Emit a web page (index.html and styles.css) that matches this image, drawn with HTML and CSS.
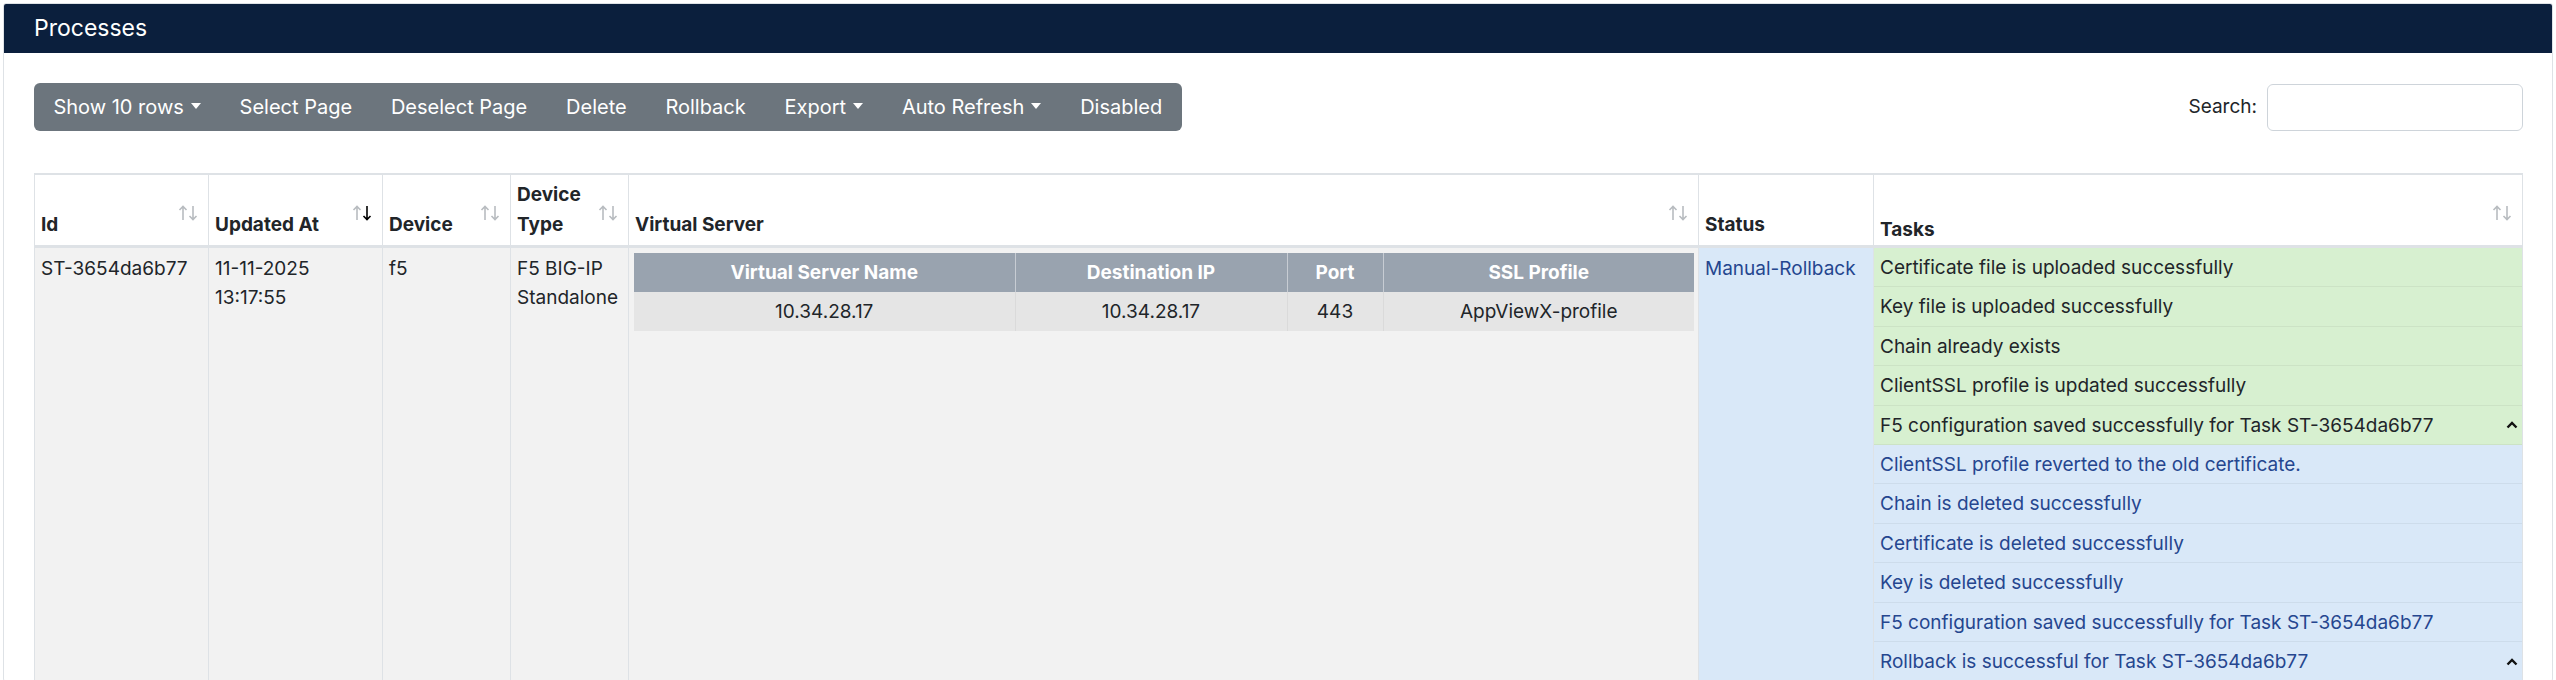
FILE: index.html
```html
<!DOCTYPE html>
<html lang="en">
<head>
    <meta charset="UTF-8">
    <meta name="viewport" content="width=device-width, initial-scale=1.0">
    <title>Processes</title>
    <link rel="stylesheet" href="styles.css">
</head>
<body>
    <div class="card">
        <div class="card-header">Processes</div>
        <div class="card-body">
            <div class="table-top">
                <div class="btn-group">
                    <button type="button" class="btn">Show 10 rows<span class="caret"></span></button>
                    <button type="button" class="btn">Select Page</button>
                    <button type="button" class="btn">Deselect Page</button>
                    <button type="button" class="btn">Delete</button>
                    <button type="button" class="btn">Rollback</button>
                    <button type="button" class="btn">Export<span class="caret"></span></button>
                    <button type="button" class="btn">Auto Refresh<span class="caret"></span></button>
                    <button type="button" class="btn">Disabled</button>
                </div>
                <label class="search">Search: <input type="search"></label>
            </div>

            <table class="processes">
                <thead>
                    <tr>
                        <th class="col-id sortable">Id
                            <svg class="sort" viewBox="0 0 20 16"><path class="up" d="M5 15V1.5M1.5 5L5 1.5L8.5 5"/><path class="down" d="M15 1V14.5M11.5 11L15 14.5L18.5 11"/></svg>
                        </th>
                        <th class="col-date sortable">Updated At
                            <svg class="sort desc" viewBox="0 0 20 16"><path class="up" d="M5 15V1.5M1.5 5L5 1.5L8.5 5"/><path class="down" d="M15 1V14.5M11.5 11L15 14.5L18.5 11"/></svg>
                        </th>
                        <th class="col-device sortable">Device
                            <svg class="sort" viewBox="0 0 20 16"><path class="up" d="M5 15V1.5M1.5 5L5 1.5L8.5 5"/><path class="down" d="M15 1V14.5M11.5 11L15 14.5L18.5 11"/></svg>
                        </th>
                        <th class="col-type sortable">Device Type
                            <svg class="sort" viewBox="0 0 20 16"><path class="up" d="M5 15V1.5M1.5 5L5 1.5L8.5 5"/><path class="down" d="M15 1V14.5M11.5 11L15 14.5L18.5 11"/></svg>
                        </th>
                        <th class="col-vs sortable">Virtual Server
                            <svg class="sort" viewBox="0 0 20 16"><path class="up" d="M5 15V1.5M1.5 5L5 1.5L8.5 5"/><path class="down" d="M15 1V14.5M11.5 11L15 14.5L18.5 11"/></svg>
                        </th>
                        <th class="col-status">Status</th>
                        <th class="col-tasks sortable">Tasks
                            <svg class="sort" viewBox="0 0 20 16"><path class="up" d="M5 15V1.5M1.5 5L5 1.5L8.5 5"/><path class="down" d="M15 1V14.5M11.5 11L15 14.5L18.5 11"/></svg>
                        </th>
                    </tr>
                </thead>
                <tbody>
                    <tr>
                        <td>ST-3654da6b77</td>
                        <td>11-11-2025<br>13:17:55</td>
                        <td>f5</td>
                        <td>F5 BIG-IP Standalone</td>
                        <td class="vs-cell">
                            <table class="vs-table">
                                <thead>
                                    <tr>
                                        <th class="vs-name">Virtual Server Name</th>
                                        <th class="vs-ip">Destination IP</th>
                                        <th class="vs-port">Port</th>
                                        <th>SSL Profile</th>
                                    </tr>
                                </thead>
                                <tbody>
                                    <tr>
                                        <td>10.34.28.17</td>
                                        <td>10.34.28.17</td>
                                        <td>443</td>
                                        <td>AppViewX-profile</td>
                                    </tr>
                                </tbody>
                            </table>
                        </td>
                        <td class="status">Manual-Rollback</td>
                        <td class="tasks">
                            <div class="task ok">Certificate file is uploaded successfully</div>
                            <div class="task ok">Key file is uploaded successfully</div>
                            <div class="task ok">Chain already exists</div>
                            <div class="task ok">ClientSSL profile is updated successfully</div>
                            <div class="task ok">F5 configuration saved successfully for Task ST-3654da6b77
                                <svg class="chevron" viewBox="0 0 12 8"><path d="M1.5 6.5L6 2L10.5 6.5"/></svg>
                            </div>
                            <div class="task info">ClientSSL profile reverted to the old certificate.</div>
                            <div class="task info">Chain is deleted successfully</div>
                            <div class="task info">Certificate is deleted successfully</div>
                            <div class="task info">Key is deleted successfully</div>
                            <div class="task info">F5 configuration saved successfully for Task ST-3654da6b77</div>
                            <div class="task info">Rollback is successful for Task ST-3654da6b77
                                <svg class="chevron" viewBox="0 0 12 8"><path d="M1.5 6.5L6 2L10.5 6.5"/></svg>
                            </div>
                        </td>
                    </tr>
                </tbody>
            </table>
        </div>
    </div>
</body>
</html>
```

FILE: styles.css
```css
body {
    margin: 3px;
    font-family: Inter, 'Liberation Sans', Arial, sans-serif;
    font-size: 19px;
    line-height: 1.5;
    color: #212529;
    background-color: #fff;
}
.card {
    border: 1px solid #dee2e6;
    border-radius: 3px;
    overflow: hidden;
}
.card-header {
    background-color: #0b1f3d;
    color: #fff;
    font-size: 23px;
    height: 49px;
    line-height: 49px;
    padding: 0 30px;
}
.card-body {
    padding: 30px 29px 0 30px;
}
.table-top {
    display: flex;
    justify-content: space-between;
    align-items: center;
    margin-bottom: 42px;
}
.btn-group {
    display: flex;
    background-color: #6c757d;
    border-radius: 6px;
    height: 48px;
}
.btn {
    background: none;
    border: none;
    color: #fff;
    font-family: inherit;
    font-size: 20px;
    padding: 0 19.4px;
    display: flex;
    align-items: center;
    cursor: pointer;
}
.caret {
    display: inline-block;
    margin-left: 7px;
    border-top: 6px solid #fff;
    border-left: 5px solid transparent;
    border-right: 5px solid transparent;
    margin-top: -2px;
}
.search {
    display: flex;
    align-items: center;
    gap: 10px;
    font-size: 19px;
}
.search input {
    width: 256px;
    height: 47px;
    box-sizing: border-box;
    border: 1px solid #ced4da;
    border-radius: 6px;
    font-family: inherit;
    font-size: 19px;
    padding: 0 10px;
}
.processes {
    width: 100%;
    table-layout: fixed;
    border-collapse: collapse;
    border-top: 2px solid #dee2e6;
    border-right: 1px solid #dee2e6;
}
.processes th,
.processes td {
    box-sizing: border-box;
}
.processes > thead > tr > th {
    position: relative;
    text-align: left;
    vertical-align: bottom;
    font-weight: 700;
    padding: 5px 6px 5px;
    line-height: 30px;
    border-left: 1px solid #dee2e6;
    border-bottom: 3px solid #dee2e6;
}
.processes > thead > tr > th.sortable {
    padding-right: 30px;
}
.col-id { width: 174px; }
.col-date { width: 174px; }
.col-device { width: 128px; }
.col-type { width: 118px; }
.col-status { width: 175px; }
.col-tasks { width: 649px; }
.processes > thead > tr > th.col-tasks {
    padding-bottom: 0;
}
.sort {
    position: absolute;
    right: 10px;
    top: 30px;
    width: 20px;
    height: 16px;
    fill: none;
    stroke: #b8bcc0;
    stroke-width: 1.6;
}
.sort.desc .down {
    stroke: #000;
}
.processes > tbody > tr > td {
    vertical-align: top;
    padding: 6px 6px 5px;
    line-height: 29.4px;
    background-color: #f2f2f2;
    border-left: 1px solid #dee2e6;
}
.processes > tbody > tr > td.vs-cell {
    padding: 5px 4px 5px 5px;
}
.processes > tbody > tr > td.status {
    background-color: #d9e8f8;
    color: #25468f;
}
.processes > tbody > tr > td.tasks {
    padding: 0;
    background-color: #d9e8f8;
}
.vs-table {
    width: 100%;
    table-layout: fixed;
    border-collapse: collapse;
    text-align: center;
}
.vs-table th,
.vs-table td {
    box-sizing: border-box;
    padding: 5px;
    line-height: 29px;
}
.vs-table th {
    background-color: #99a3af;
    color: #fff;
    font-weight: 700;
    border-left: 1px solid #c7ccd3;
}
.vs-table td {
    background-color: #e5e5e5;
    border-left: 1px solid #dadada;
}
.vs-table th:first-child,
.vs-table td:first-child {
    border-left: none;
}
.vs-name { width: 381px; }
.vs-ip { width: 272px; }
.vs-port { width: 96px; }
.task {
    display: flex;
    justify-content: space-between;
    align-items: center;
    padding: 5px 4px 4px 6px;
    border-bottom: 1px solid rgba(0, 0, 0, 0.05);
}
.task.ok {
    background-color: #d7f0d0;
    color: #212529;
}
.task.info {
    background-color: #d9e8f8;
    color: #25468f;
}
.chevron {
    width: 12px;
    height: 8px;
    fill: none;
    stroke: #111;
    stroke-width: 2.4;
}
```
